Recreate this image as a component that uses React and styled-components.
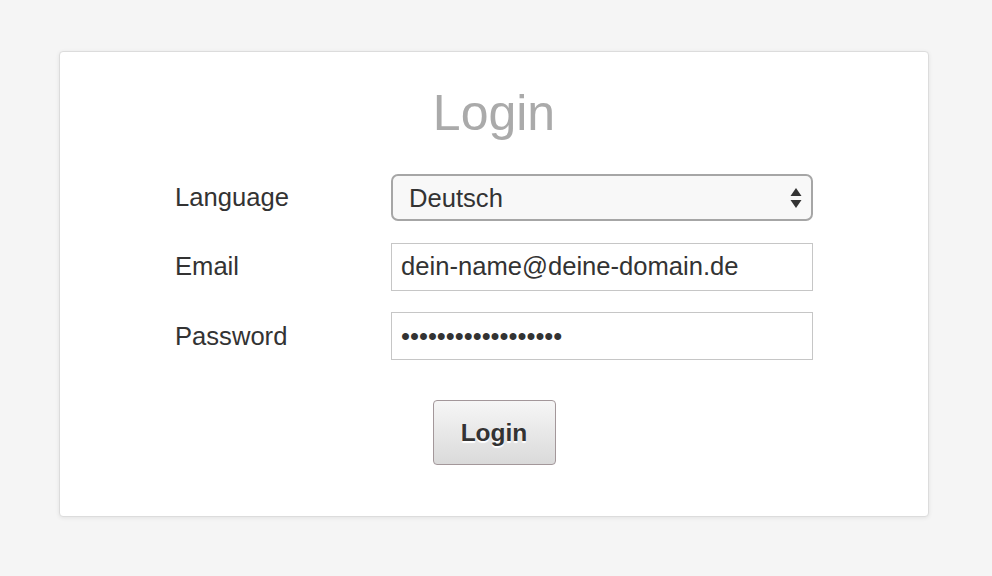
import React, { useState } from 'react'
import styled, { createGlobalStyle } from 'styled-components'

const GlobalStyle = createGlobalStyle`
  html, body {
    margin: 0;
    padding: 0;
    background-color: #f5f5f5;
    font-family: "Liberation Sans", Arial, sans-serif;
  }
  * {
    box-sizing: border-box;
  }
`

const Page = styled.div`
  min-height: 576px;
  padding: 51px 63px 0 59px;
`

const Card = styled.div`
  padding: 35px 0 51px;
  background-color: #fff;
  border: 1px solid #dcdcdc;
  border-radius: 4px;
  box-shadow: 0 1px 4px rgba(0, 0, 0, 0.08);
  display: flex;
  flex-direction: column;
  align-items: center;
`

const Title = styled.h1`
  margin: 0;
  font-size: 50px;
  line-height: 52px;
  font-weight: 400;
  color: #aaaaaa;
`

const Form = styled.form`
  margin-top: 35px;
  display: grid;
  grid-template-columns: 216px 422px;
  row-gap: 21.5px;
  align-items: center;
`

const Label = styled.label`
  font-size: 25.6px;
  color: #333;
`

const Select = styled.select`
  appearance: none;
  height: 47px;
  width: 100%;
  padding: 0 40px 0 16px;
  font-family: inherit;
  font-size: 25.6px;
  color: #333;
  background-color: #f8f8f8;
  background-image: url("data:image/svg+xml;utf8,<svg xmlns='http://www.w3.org/2000/svg' width='12' height='22' viewBox='0 0 12 22'><path d='M6 1 L11.5 9 L0.5 9 Z' fill='%23333'/><path d='M6 21 L11.5 13 L0.5 13 Z' fill='%23333'/></svg>");
  background-repeat: no-repeat;
  background-position: right 9px center;
  border: 2px solid #a6a6a6;
  border-radius: 7px;
  outline: none;
`

const Input = styled.input`
  height: 48px;
  width: 100%;
  padding: 0 9px;
  font-family: inherit;
  font-size: 25.6px;
  color: #333;
  background-color: #fff;
  border: 1px solid #c6c6c6;
  border-radius: 0;
  outline: none;
`

const Button = styled.button`
  margin-top: 40px;
  width: 123px;
  height: 65px;
  font-family: inherit;
  font-size: 24.5px;
  font-weight: 700;
  color: #333;
  text-shadow: 0 2px 1px #fff;
  background: linear-gradient(#f6f6f6, #dadada);
  border: 1px solid #a3979a;
  border-radius: 4px;
  cursor: pointer;
`

const App = () => {
  const [language, setLanguage] = useState('de')
  const [email, setEmail] = useState('dein-name@deine-domain.de')
  const [password, setPassword] = useState('xxxxxxxxxxxxxxxxxx')

  return (
    <Page>
      <GlobalStyle />
      <Card>
        <Title>Login</Title>
        <Form onSubmit={(e) => e.preventDefault()}>
          <Label htmlFor="language">Language</Label>
          <Select
            id="language"
            value={language}
            onChange={(e) => setLanguage(e.target.value)}
          >
            <option value="de">Deutsch</option>
            <option value="en">English</option>
          </Select>

          <Label htmlFor="email">Email</Label>
          <Input
            id="email"
            type="text"
            value={email}
            onChange={(e) => setEmail(e.target.value)}
          />

          <Label htmlFor="password">Password</Label>
          <Input
            id="password"
            type="password"
            value={password}
            onChange={(e) => setPassword(e.target.value)}
          />
        </Form>
        <Button type="button">Login</Button>
      </Card>
    </Page>
  )
}

export default App
